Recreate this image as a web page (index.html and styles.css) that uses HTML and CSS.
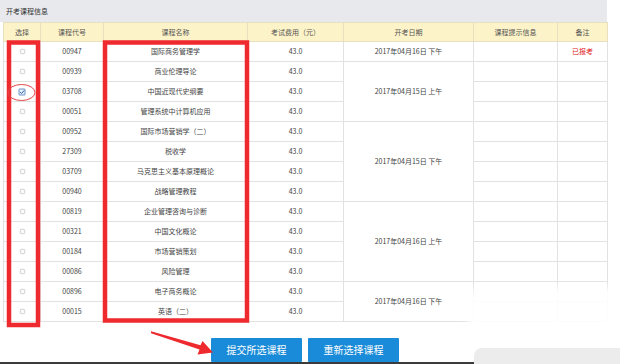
FILE: index.html
```html
<!DOCTYPE html>
<html lang="zh-CN">
<head>
<meta charset="utf-8">
<title>开考课程信息</title>
<link rel="stylesheet" href="styles.css">
</head>
<body>
<div class="page">
  <div class="title-bar">开考课程信息</div>
  <table class="courses">
    <colgroup>
      <col class="c-sel"><col class="c-code"><col class="c-name"><col class="c-fee"><col class="c-date"><col class="c-hint"><col class="c-note">
    </colgroup>
    <thead>
      <tr><th>选择</th><th>课程代号</th><th>课程名称</th><th>考试费用（元）</th><th>开考日期</th><th>课程提示信息</th><th>备注</th></tr>
    </thead>
    <tbody>
      <tr><td><svg class="cb" viewBox="0 0 8 8"><rect x="1.5" y="1.5" width="5" height="5" rx="1"/></svg></td><td>00947</td><td>国际商务管理学</td><td>43.0</td><td>2017年04月16日 下午</td><td></td><td class="red">已报考</td></tr>
      <tr><td><svg class="cb" viewBox="0 0 8 8"><rect x="1.5" y="1.5" width="5" height="5" rx="1"/></svg></td><td>00939</td><td>商业伦理导论</td><td>43.0</td><td rowspan="3">2017年04月15日 上午</td><td></td><td></td></tr>
      <tr><td><svg class="cb cb-on" viewBox="0 0 8 8"><rect x="1" y="1" width="6" height="6" rx="0.5"/><path d="M2.2 4.1 L3.6 5.5 L6.2 2.4"/></svg></td><td>03708</td><td>中国近现代史纲要</td><td>43.0</td><td></td><td></td></tr>
      <tr><td><svg class="cb" viewBox="0 0 8 8"><rect x="1.5" y="1.5" width="5" height="5" rx="1"/></svg></td><td>00051</td><td>管理系统中计算机应用</td><td>43.0</td><td></td><td></td></tr>
      <tr><td><svg class="cb" viewBox="0 0 8 8"><rect x="1.5" y="1.5" width="5" height="5" rx="1"/></svg></td><td>00952</td><td>国际市场营销学（二）</td><td>43.0</td><td rowspan="4">2017年04月15日 下午</td><td></td><td></td></tr>
      <tr><td><svg class="cb" viewBox="0 0 8 8"><rect x="1.5" y="1.5" width="5" height="5" rx="1"/></svg></td><td>27309</td><td>税收学</td><td>43.0</td><td></td><td></td></tr>
      <tr><td><svg class="cb" viewBox="0 0 8 8"><rect x="1.5" y="1.5" width="5" height="5" rx="1"/></svg></td><td>03709</td><td>马克思主义基本原理概论</td><td>43.0</td><td></td><td></td></tr>
      <tr><td><svg class="cb" viewBox="0 0 8 8"><rect x="1.5" y="1.5" width="5" height="5" rx="1"/></svg></td><td>00940</td><td>战略管理教程</td><td>43.0</td><td></td><td></td></tr>
      <tr><td><svg class="cb" viewBox="0 0 8 8"><rect x="1.5" y="1.5" width="5" height="5" rx="1"/></svg></td><td>00819</td><td>企业管理咨询与诊断</td><td>43.0</td><td rowspan="4">2017年04月16日 上午</td><td></td><td></td></tr>
      <tr><td><svg class="cb" viewBox="0 0 8 8"><rect x="1.5" y="1.5" width="5" height="5" rx="1"/></svg></td><td>00321</td><td>中国文化概论</td><td>43.0</td><td></td><td></td></tr>
      <tr><td><svg class="cb" viewBox="0 0 8 8"><rect x="1.5" y="1.5" width="5" height="5" rx="1"/></svg></td><td>00184</td><td>市场营销策划</td><td>43.0</td><td></td><td></td></tr>
      <tr><td><svg class="cb" viewBox="0 0 8 8"><rect x="1.5" y="1.5" width="5" height="5" rx="1"/></svg></td><td>00086</td><td>风险管理</td><td>43.0</td><td></td><td></td></tr>
      <tr><td><svg class="cb" viewBox="0 0 8 8"><rect x="1.5" y="1.5" width="5" height="5" rx="1"/></svg></td><td>00896</td><td>电子商务概论</td><td>43.0</td><td rowspan="2">2017年04月16日 下午</td><td></td><td></td></tr>
      <tr><td><svg class="cb" viewBox="0 0 8 8"><rect x="1.5" y="1.5" width="5" height="5" rx="1"/></svg></td><td>00015</td><td>英语（二）</td><td>43.0</td><td></td><td></td></tr>
    </tbody>
  </table>
  <div class="actions">
    <button class="btn">提交所选课程</button>
    <button class="btn">重新选择课程</button>
  </div>
  <div class="edge"></div>

  <div class="haze"></div>
  <div class="haze-band"></div>

  <svg class="marks" viewBox="0 0 620 364">
    <rect class="box" x="9" y="42.5" width="29" height="282.5"/>
    <rect class="box" x="105" y="42.5" width="142" height="278"/>
    <ellipse class="ring" cx="21.5" cy="92.5" rx="13.5" ry="8"/>
    <polygon class="arrow" points="151,331.2 200.5,345.2 202.5,341 213,352.5 197.5,354.5 199.5,349.5 151,333.2"/>
  </svg>
</div>
</body>
</html>
```

FILE: styles.css
```css
* { box-sizing: border-box; }

html, body {
  margin: 0;
  padding: 0;
  background: #ffffff;
}

body {
  font-family: "Noto Sans CJK SC", "Noto Sans", sans-serif;
  color: #444;
}

.page {
  position: relative;
  width: 620px;
  height: 364px;
  overflow: hidden;
}

.title-bar {
  width: 607px;
  height: 22px;
  background: #e8e9ed;
  font-size: 7px;
  line-height: 22px;
  padding-left: 6px;
  color: #333;
}

.courses {
  margin-left: 3px;
  width: 604px;
  table-layout: fixed;
  border-collapse: collapse;
  font-size: 7px;
  line-height: 1;
}

.c-sel { width: 37px; }
.c-code { width: 63px; }
.c-name { width: 144px; }
.c-fee { width: 96px; }
.c-date { width: 130px; }
.c-hint { width: 84px; }
.c-note { width: 50px; }

.courses th {
  height: 19px;
  background: #fdf3c8;
  font-weight: normal;
  color: #555;
  border: 1px solid #e6e0c0;
  padding: 0;
  text-align: center;
}

.courses td {
  height: 20px;
  border: 1px solid #e2e2e2;
  padding: 0;
  text-align: center;
  vertical-align: middle;
  white-space: nowrap;
  color: #444;
}

.courses .red { color: #e02020; }

.cb {
  display: block;
  width: 7px;
  height: 7px;
  margin: 0 auto;
}

.cb rect {
  fill: #fafafa;
  stroke: #c6c6c6;
  stroke-width: 0.9;
}

.cb-on {
  width: 8px;
  height: 8px;
}

.cb-on rect {
  fill: #e8f0fa;
  stroke: #4a78b8;
  stroke-width: 0.8;
}

.cb-on path {
  fill: none;
  stroke: #2a62ad;
  stroke-width: 1;
}

.actions {
  display: flex;
  gap: 6px;
  padding-left: 211px;
  margin-top: 16px;
}

.btn {
  width: 91px;
  height: 24px;
  border: 0;
  border-radius: 1px;
  background: #1a8bd8;
  color: #ffffff;
  font-family: "Noto Sans CJK SC", sans-serif;
  font-size: 10px;
  line-height: 24px;
  padding: 0;
}

.edge {
  width: 495px;
  height: 3px;
  margin-top: 0;
  background: #3b3b3b;
}

.haze {
  position: absolute;
  left: 472px;
  top: 291px;
  width: 148px;
  height: 58px;
  border-radius: 10px 0 0 10px;
  background: rgba(255, 255, 255, 0.9);
  box-shadow: 0 0 6px 4px rgba(255, 255, 255, 0.9);
}

.haze-band {
  position: absolute;
  left: 474px;
  top: 348px;
  width: 146px;
  height: 16px;
  border-radius: 8px 0 0 0;
  background: #ececec;
}

.marks {
  position: absolute;
  left: 0;
  top: 0;
  width: 620px;
  height: 364px;
}

.marks .box {
  fill: none;
  stroke: #ee2a2e;
  stroke-width: 4.5;
}

.marks .ring {
  fill: none;
  stroke: #e0464a;
  stroke-width: 1;
}

.marks .arrow {
  fill: #ee2a2e;
}
```
